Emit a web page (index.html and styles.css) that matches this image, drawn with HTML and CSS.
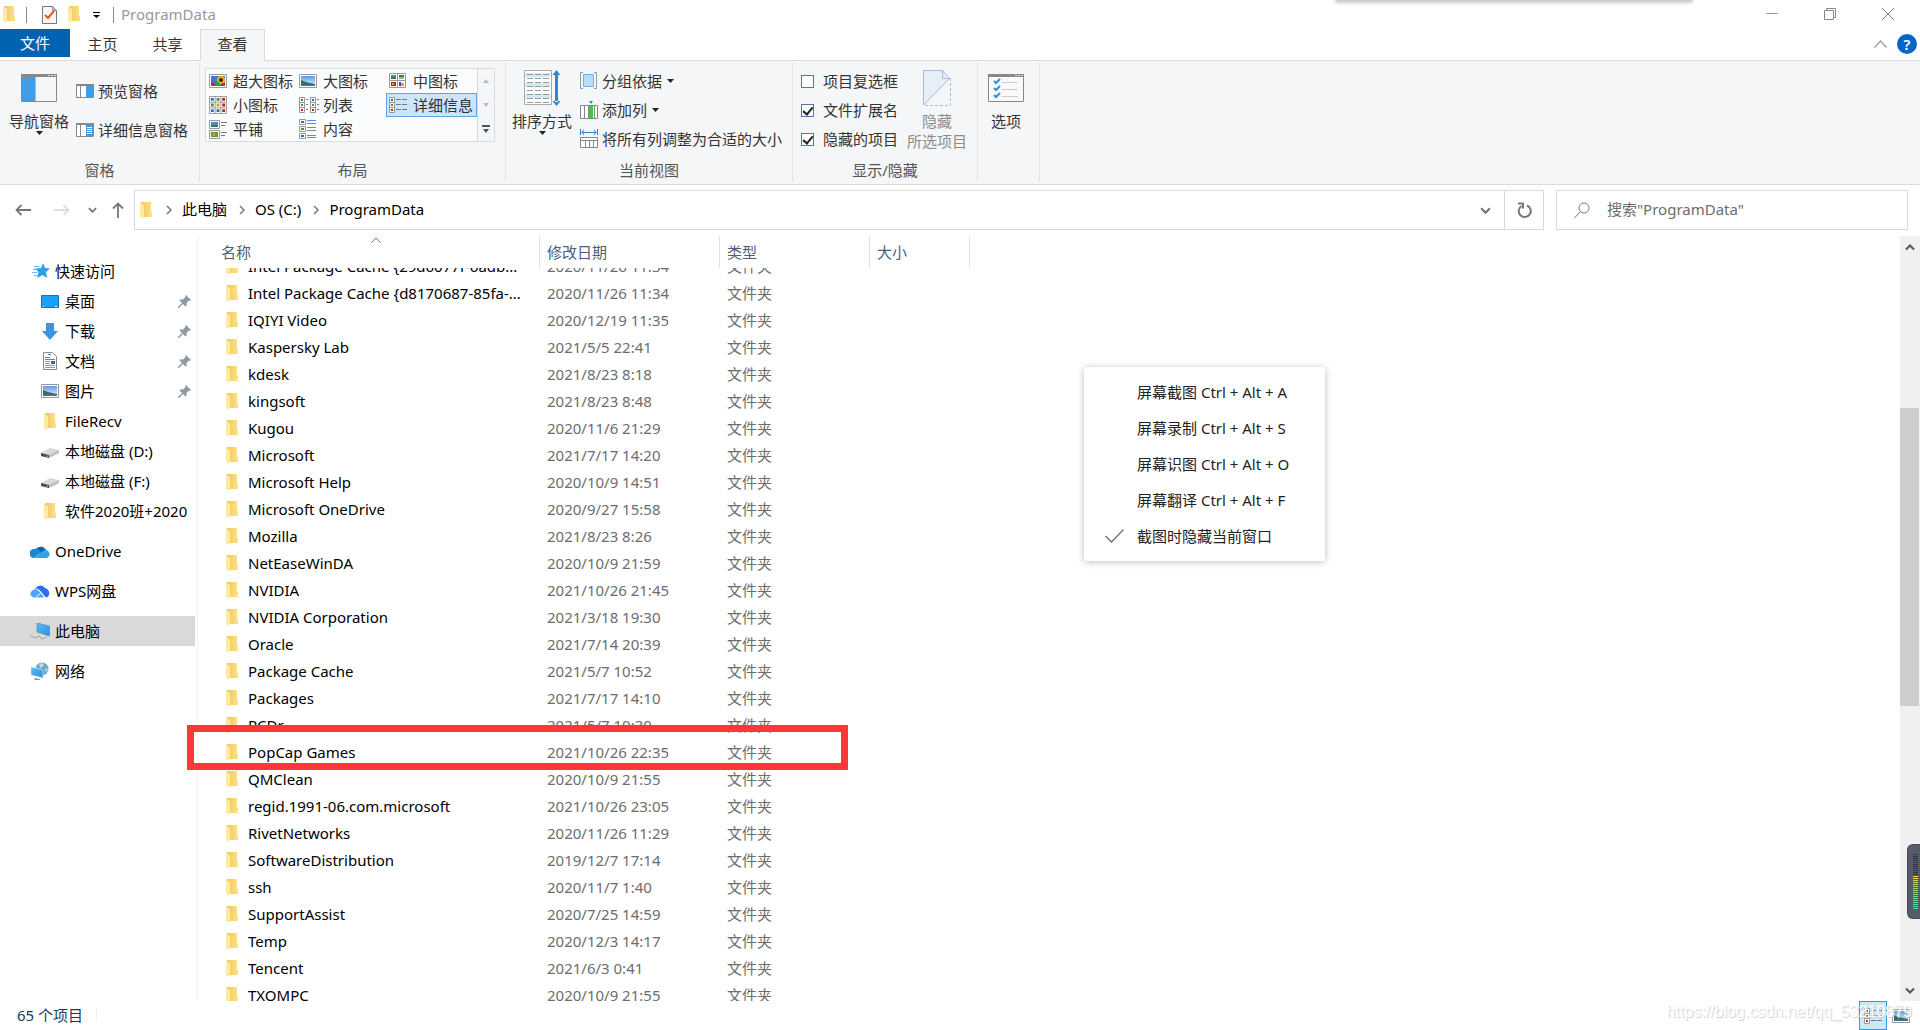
FILE: index.html
```html
<!DOCTYPE html>
<html lang="zh-CN">
<head>
<meta charset="utf-8">
<title>ProgramData</title>
<link rel="stylesheet" href="styles.css">
</head>
<body>
<svg class="defs" aria-hidden="true">
  <defs>
    <linearGradient id="gold" x1="0" x2="1"><stop offset="0" stop-color="#efc75e"/><stop offset="1" stop-color="#ffe08a"/></linearGradient>
    <linearGradient id="sky" x1="0" y1="0" x2="0" y2="1"><stop offset="0" stop-color="#5b9be8"/><stop offset="1" stop-color="#e4f1fb"/></linearGradient>
    <linearGradient id="blue" x1="0" y1="0" x2="1" y2="1"><stop offset="0" stop-color="#5cbcf5"/><stop offset="1" stop-color="#2b8fe0"/></linearGradient>
  </defs>
  <symbol id="folder" viewBox="0 0 12 17"><path fill="url(#gold)" d="M1 0h10v10h1v5H1z"/><path fill="#ffe9a6" d="M0 1l4 2v11l-1 3-3-2z"/></symbol>
  <symbol id="photo" viewBox="0 0 18 14"><path fill="#fff" stroke="#999" d="M.5.5h17v13H.5z"/><path fill="url(#sky)" d="M2 2h14v10H2z"/><path fill="#3f6b55" d="M2 6l5 2 9 2v1H2z"/><path fill="#3c74a8" d="M2 10.500h14V12H2z"/></symbol>
  <symbol id="photo-flower" viewBox="0 0 18 14"><path fill="#fff" stroke="#999" d="M.5.5h17v13H.5z"/><path fill="#3d77d8" d="M2 2h14v10H2z"/><circle cx="12" cy="6" r="4" fill="#f2b300"/><circle cx="12" cy="6" r="2" fill="#4a2108"/><path fill="#d0252c" d="M2 12V8l3 1 2 3zM13 9h3v3h-4z"/><path fill="#2f9b42" d="M6 8h4v4H7z"/></symbol>
  <symbol id="medium" viewBox="0 0 18 16"><path fill="#fff" stroke="#999" d="M.5.5h16v14H.5zM8.500.5v14M.5 7.500h16"/><path fill="#4a8fc0" d="M2 2h5v2H2z"/><path fill="#47734d" d="M2 4h5v2H2zM10 2h5v2h-5z"/><path fill="#8fc77a" d="M10 4h5v2h-5z"/><path fill="#b3261e" d="M2 9h5v4H2z"/><path fill="#e7a51d" d="M3 10h2v2H3zM12 10h3v3h-3z"/><path fill="#3450a4" d="M10 9h2v4h-2z"/></symbol>
  <symbol id="small" viewBox="0 0 19 19"><path fill="#fff" stroke="#999" d="M.5.5h18v18H.5zM6.500.5v18M12.500.5v18M.5 6.500h18M.5 12.500h18"/><path fill="#2f6fa8" d="M2 2h3v3H2zM2 14h3v3H2zM8 14h3v3H8z"/><path fill="#5a8e3e" d="M8 2h3v3H8zM2 8h3v3H2z"/><path fill="#b3261e" d="M14 2h3v3h-3zM14 8h3v3h-3zM14 14h3v3h-3z"/><path fill="#d79a1c" d="M8 8h3v3H8z"/></symbol>
  <symbol id="details" viewBox="0 0 19 16"><path fill="#fff" stroke="#999" d="M.5.5h5v15h-5zM.5 5.500h5M.5 10.500h5"/><path fill="#2f6fa8" d="M2 2h2v2H2z"/><path fill="#6b7a22" d="M2 7h2v2H2z"/><path fill="#c22" d="M2 12h2v2H2z"/><path stroke="#777" d="M7 2.500h5M13 2.500h5M7 7.500h5M13 7.500h5M7 12.500h5M13 12.500h5"/></symbol>
  <symbol id="list" viewBox="0 0 20 16"><path fill="#fff" stroke="#999" d="M.5.5h5v15h-5zM.5 5.500h5M.5 10.500h5M11.500.5h5v15h-5zM11.500 5.500h5M11.500 10.500h5"/><path fill="#2f6fa8" d="M2 2h2v2H2zM13 2h2v2h-2z"/><path fill="#5a8e3e" d="M2 7h2v2H2zM13 7h2v2h-2z"/><path fill="#c22" d="M2 12h2v2H2zM13 12h2v2h-2z"/><path stroke="#777" d="M7 2.500h2M7 7.500h2M7 12.500h2M18 2.500h2M18 7.500h2M18 12.500h2"/></symbol>
  <symbol id="tiles" viewBox="0 0 19 19"><path fill="#fff" stroke="#999" d="M.5.5h10v8H.5zM.5 10.500h10v8H.5z"/><path fill="#4a8fc0" d="M2 2h7v3H2z"/><path fill="#47734d" d="M2 5h7v2H2z"/><path fill="#5a9e3e" d="M2 12h7v5H2z"/><path fill="#e7a51d" d="M4 13h2v3H4z"/><path stroke="#777" d="M12 2.500h6M12 5.500h4M12 12.500h6M12 15.500h4"/></symbol>
  <symbol id="content" viewBox="0 0 18 20"><path fill="#fff" stroke="#999" d="M.5.5h6v5h-6zM.5 7.500h6v5h-6zM.5 14.500h6v5h-6z"/><path fill="#2f6fa8" d="M2 2h3v2H2zM2 16h3v2H2z"/><path fill="#5a8e3e" d="M2 9h3v2H2z"/><path stroke="#4a8cf0" d="M8 1.500h9M8 8.500h9M8 16.500h9"/><path stroke="#888" d="M8 4.500h9M8 11.500h9M8 18.500h9"/></symbol>
  <symbol id="pin" viewBox="0 0 13 13"><path fill="#8e9aa3" d="M8 0l5 5-1 1-1-.5L8.500 8l.2 2.500-1.200 1L5 9 1 13H0v-1l4-4-2.500-2.500 1-1.200L5 4.500 7.500 2 7 1z"/></symbol>
  <symbol id="drive" viewBox="0 -4 18 14"><path fill="#d9d9d9" d="M0 5L9 0l9 2v3L8 10 0 8z"/><path fill="#c0c0c0" d="M8 7l10-5v3L8 10z"/><path fill="#4b4f4c" d="M0 5l8 2v3L0 8z"/><path fill="#5fd35b" d="M5 7.500l2 .5v1l-2-.5z"/></symbol>
  <symbol id="chev" viewBox="0 0 10 6"><path fill="none" stroke="currentColor" stroke-width="2" d="M1 1l4 4 4-4"/></symbol>
  <symbol id="crumb" viewBox="0 0 6 10"><path fill="none" stroke="#777" stroke-width="1.500" d="M1 1l4 4-4 4"/></symbol>
  <symbol id="tri" viewBox="0 0 7 4"><path fill="currentColor" d="M0 0h7L3.500 4z"/></symbol>
</svg>

<div class="window">
  <header class="titlebar">
    <svg class="i-folder"><use href="#folder"/></svg>
    <span class="bar"></span>
    <button class="plain" aria-label="属性"><svg width="15" height="18" viewBox="0 0 15 18"><path fill="#f7f7f7" stroke="#777" d="M.5.5h10l4 4v13H.5z"/><path fill="#ccc" stroke="#888" d="M10.500.5v4h4z"/><path fill="none" stroke="#f0561d" stroke-width="2" d="M3 9l3 3 6-7"/></svg></button>
    <button class="plain" aria-label="新建文件夹"><svg class="i-folder"><use href="#folder"/></svg></button>
    <button class="plain qat" aria-label="自定义快速访问工具栏"><svg width="7" height="6" viewBox="0 0 7 6"><path d="M0 0h7v1H0zM0 3h7L3.500 6z"/></svg></button>
    <span class="bar"></span>
    <span class="title">ProgramData</span>
    <span class="drop-edge"></span>
    <div class="winbtns">
      <button class="plain" aria-label="最小化"><svg width="12" height="12" viewBox="0 0 12 12"><path stroke="#999" d="M0 5.500h12"/></svg></button>
      <button class="plain" aria-label="还原"><svg width="12" height="12" viewBox="0 0 12 12"><path fill="none" stroke="#888" d="M.5 2.500h9v9h-9zM2.500 2.500v-2h9v9h-2"/></svg></button>
      <button class="plain" aria-label="关闭"><svg width="12" height="12" viewBox="0 0 12 12"><path stroke="#888" d="M0 0l12 12M12 0L0 12"/></svg></button>
    </div>
  </header>

  <nav class="tabs">
    <button class="tab file">文件</button>
    <button class="tab">主页</button>
    <button class="tab">共享</button>
    <button class="tab active">查看</button>
    <div class="tabs-end">
      <button class="plain" aria-label="最小化功能区"><svg width="13" height="8" viewBox="0 0 13 8"><path fill="none" stroke="#999" stroke-width="1.200" d="M.5 7.500l6-6.500 6 6.500"/></svg></button>
      <button class="help" aria-label="帮助">?</button>
    </div>
  </nav>

  <section class="ribbon">
    <div class="group g-pane">
      <div class="group-body">
        <button class="big nav-big"><svg width="36" height="28" viewBox="0 0 36 28"><path fill="#f6f6f6" stroke="#888" d="M.5.5h35v27H.5z"/><path fill="#888" d="M0 0h36v3H0z"/><path stroke="#ddd" stroke-dasharray="2 1" d="M27 1.500h8"/><path fill="#3f9ce6" d="M1 3h13v24H1z"/><path fill="#bbb" d="M14 3h1v24h-1z"/></svg><span>导航窗格</span><svg class="i-tri"><use href="#tri"/></svg></button>
        <div class="stack two">
          <button class="small"><svg width="18" height="14" viewBox="0 0 18 14"><path fill="#fff" stroke="#888" d="M.5.5h17v13H.5zM4.500 1v12"/><path fill="#888" d="M0 0h18v2H0z"/><path fill="#3f9ce6" d="M10 2h7v11h-7z"/></svg>预览窗格</button>
          <button class="small"><svg width="18" height="14" viewBox="0 0 18 14"><path fill="#fff" stroke="#888" d="M.5.5h17v13H.5zM4.500 1v12"/><path fill="#888" d="M0 0h18v2H0z"/><path fill="#3f9ce6" d="M10 2h7v11h-7z"/><path stroke="#fff" d="M11 4.500h5M11 6.500h5M11 8.500h5M11 10.500h5"/></svg>详细信息窗格</button>
        </div>
      </div>
      <div class="group-name">窗格</div>
    </div>

    <div class="group g-layout">
      <div class="group-body">
        <div class="gallery">
          <button><svg width="18" height="14"><use href="#photo-flower"/></svg><span>超大图标</span></button>
          <button><svg width="18" height="14"><use href="#photo"/></svg><span>大图标</span></button>
          <button><svg width="18" height="16"><use href="#medium"/></svg><span>中图标</span></button>
          <button><svg width="18" height="18"><use href="#small"/></svg><span>小图标</span></button>
          <button><svg width="20" height="16"><use href="#list"/></svg><span>列表</span></button>
          <button class="on"><svg width="19" height="16"><use href="#details"/></svg><span>详细信息</span></button>
          <button><svg width="19" height="19"><use href="#tiles"/></svg><span>平铺</span></button>
          <button><svg width="18" height="20"><use href="#content"/></svg><span>内容</span></button>
        </div>
        <div class="gallery-nav">
          <button aria-label="上一行"><svg width="6" height="4" viewBox="0 0 6 4"><path fill="#b4bbc4" d="M0 4h6L3 0z"/></svg></button>
          <button aria-label="下一行"><svg width="6" height="4" viewBox="0 0 6 4"><path fill="#b4bbc4" d="M0 0h6L3 4z"/></svg></button>
          <button aria-label="更多"><svg width="8" height="8" viewBox="0 0 8 8"><path fill="#44546a" d="M0 0h8v2H0zM1 4h6L4 8z"/></svg></button>
        </div>
      </div>
      <div class="group-name">布局</div>
    </div>

    <div class="group g-view">
      <div class="group-body">
        <button class="big"><svg width="36" height="36" viewBox="0 0 36 36"><path fill="#fff" stroke="#aaa" d="M.5.5h27v34H.5z"/><path fill="#d3e9f5" d="M1 3h26v4H1zM1 13h26v4H1zM1 24h26v4H1z"/><path stroke="#999" stroke-dasharray="6 2" d="M3 4.500h23M3 8.500h23M3 12.500h23M3 16.500h23M3 20.500h23M3 24.500h23M3 28.500h23M3 32.500h23"/><path fill="#2f86d1" d="M31 4h3v28h-3zM28.500 5l4-5 4 5zM28.500 31l4 5 4-5z"/></svg><span>排序方式</span><svg class="i-tri"><use href="#tri"/></svg></button>
        <div class="stack three">
          <button class="small"><svg width="18" height="18" viewBox="0 0 18 18"><path fill="none" stroke="#999" d="M3 .5H.5v16H3M14 .5h2.500v16H14"/><path fill="#b5defc" stroke="#6fb2e0" d="M3.500 2.500h10v12h-10z"/></svg>分组依据<svg class="i-tri"><use href="#tri"/></svg></button>
          <button class="small"><svg width="18" height="18" viewBox="0 0 18 18"><path fill="#2f86d1" d="M9 0h4l-2 3z"/><path fill="#fff" stroke="#888" d="M.5 4.500h17v13H.5zM4.500 5v12M8.500 5v12M14.500 5v12"/><path fill="#2ed02e" d="M9 5h4v12H9z"/></svg>添加列<svg class="i-tri"><use href="#tri"/></svg></button>
          <button class="small"><svg width="18" height="20" viewBox="0 0 18 20"><path fill="none" stroke="#2f7fc4" d="M.5 0v6M17.500 0v6M2 3.500h14M4 1L2 3.500 4 6M14 1l2 2.500L14 6"/><path fill="#fff" stroke="#888" d="M.5 8.500h17v10H.5zM.5 11.500h17M5.500 12v7M9.500 12v7M13.500 12v7"/></svg>将所有列调整为合适的大小</button>
        </div>
      </div>
      <div class="group-name">当前视图</div>
    </div>

    <div class="group g-show">
      <div class="group-body">
        <div class="stack three">
          <label class="check"><input type="checkbox">项目复选框</label>
          <label class="check"><input type="checkbox" checked>文件扩展名</label>
          <label class="check"><input type="checkbox" checked>隐藏的项目</label>
        </div>
        <button class="big" disabled><svg width="28" height="36" viewBox="0 0 28 36"><path fill="#e6eefa" d="M.5.5h19l7 8L.5 35z"/><path fill="none" stroke="#a9b8d6" d="M.5 35V.5h19l7 8L.5 35M19.500.5v8h7"/><path fill="none" stroke="#a9b8d6" stroke-dasharray="3 2" d="M27.500 8v27.500H0"/></svg><span>隐藏<br>所选项目</span></button>
      </div>
      <div class="group-name">显示/隐藏</div>
    </div>

    <div class="group g-opt">
      <div class="group-body">
        <button class="big nav-big"><svg width="36" height="28" viewBox="0 0 36 28"><path fill="#f9f9f9" stroke="#888" d="M.5.5h35v27H.5z"/><path fill="#888" d="M0 0h36v3H0z"/><path stroke="#ddd" stroke-dasharray="2 1" d="M27 1.500h8"/><path fill="none" stroke="#2f8fe0" stroke-width="2" d="M6 7l2 2 4-4M6 14l2 2 4-4M6 21l2 2 4-4"/><path stroke="#ccc" d="M14 8.500h16M14 15.500h16M14 22.500h16"/></svg><span>选项</span></button>
      </div>
    </div>
  </section>

  <div class="addressrow">
    <button class="plain" aria-label="后退"><svg width="16" height="12" viewBox="0 0 16 12"><path fill="none" stroke="#777" stroke-width="1.800" d="M16 6H1.500M6.500 1l-5 5 5 5"/></svg></button>
    <button class="plain fwd" aria-label="前进"><svg width="16" height="12" viewBox="0 0 16 12"><path fill="none" stroke="#ddd" stroke-width="1.800" d="M0 6h14.500M9.500 1l5 5-5 5"/></svg></button>
    <button class="plain recent" aria-label="最近浏览的位置"><svg width="9" height="6"><use href="#chev"/></svg></button>
    <button class="plain up" aria-label="上移"><svg width="12" height="16" viewBox="0 0 12 16"><path fill="none" stroke="#777" stroke-width="1.800" d="M6 16V1.500M1 6.500l5-5 5 5"/></svg></button>
    <div class="address">
      <svg class="i-folder"><use href="#folder"/></svg>
      <svg class="i-crumb"><use href="#crumb"/></svg><a href="#">此电脑</a>
      <svg class="i-crumb"><use href="#crumb"/></svg><a href="#">OS (C:)</a>
      <svg class="i-crumb"><use href="#crumb"/></svg><a href="#">ProgramData</a>
      <button class="plain drop" aria-label="以前的位置"><svg width="11" height="7"><use href="#chev"/></svg></button>
      <button class="plain refresh" aria-label="刷新"><svg width="15" height="17" viewBox="0 0 15 17"><path fill="none" stroke="#777" stroke-width="2" d="M10 3.500A6 6 0 1 1 4.500 4"/><path fill="none" stroke="#777" stroke-width="2" d="M1 1.500h5v5"/></svg></button>
    </div>
    <label class="search">
      <svg width="16" height="17" viewBox="0 0 16 17"><circle cx="10" cy="6" r="5" fill="none" stroke="#777"/><path stroke="#777" d="M6.500 9.500L0 16.500"/></svg>
      <input type="text" placeholder="搜索&quot;ProgramData&quot;" aria-label="搜索">
    </label>
  </div>

  <main class="content">
    <aside class="tree">
      <ul>
        <li><a href="#" class="root"><svg width="18" height="16" viewBox="0 0 18 16"><path fill="#2b9fec" d="M11 0l2 5 5 .5-4 3.500 1 6-4.500-3L5 15l1.500-6L3 5.500 9 5z"/><path stroke="#64bdf3" d="M2 3.500h5M1 6.500h5M0 9.500h5M2 12.500h3"/></svg>快速访问</a></li>
        <li><a href="#"><svg width="18" height="13" viewBox="0 0 18 13"><path fill="#19a0fb" stroke="#1272bd" d="M.5.5h17v12H.5z"/><path stroke="#fff" d="M2 11.500h1M14 11.500h2"/></svg><span>桌面</span><svg class="i-pin"><use href="#pin"/></svg></a></li>
        <li><a href="#"><svg width="18" height="17" viewBox="0 0 18 17"><path fill="#3a94e4" d="M5 0h8v8h4l-8 9-8-9h4z"/></svg><span>下载</span><svg class="i-pin"><use href="#pin"/></svg></a></li>
        <li><a href="#"><svg width="18" height="18" viewBox="0 0 18 18"><path fill="#fff" stroke="#888" d="M2.500.5h9l4 4v13h-13z"/><path stroke="#3a94c4" d="M4 5.500h5M7 2.500h3M4 7.500h10"/><path stroke="#999" d="M4 9.500h5M4 11.500h5M4 13.500h10M4 15.500h10"/><path fill="#2f6f9f" d="M10 9h4v3h-4z"/></svg><span>文档</span><svg class="i-pin"><use href="#pin"/></svg></a></li>
        <li><a href="#"><svg width="18" height="14"><use href="#photo"/></svg><span>图片</span><svg class="i-pin"><use href="#pin"/></svg></a></li>
        <li><a href="#"><svg width="18" height="17"><use href="#folder"/></svg><span>FileRecv</span></a></li>
        <li><a href="#"><svg width="18" height="14"><use href="#drive"/></svg><span>本地磁盘 (D:)</span></a></li>
        <li><a href="#"><svg width="18" height="14"><use href="#drive"/></svg><span>本地磁盘 (F:)</span></a></li>
        <li><a href="#"><svg width="18" height="17"><use href="#folder"/></svg><span>软件2020班+2020</span></a></li>
      </ul>
      <ul>
        <li><a href="#" class="root wide"><svg width="20" height="13" viewBox="0 0 20 13"><path fill="#0f5fae" d="M6 4a6 6 0 0 1 10 1L9 9z"/><path fill="#1787d8" d="M4 13a4 4 0 0 1 0-9c3-1 5 0 7 3z"/><path fill="#28a8ea" d="M4 13l9-7c4-3 8 2 6 5-1 2-2 2-4 2z"/></svg>OneDrive</a></li>
      </ul>
      <ul>
        <li><a href="#" class="root wide"><svg width="20" height="14" viewBox="0 0 20 14"><path fill="#2a6ff0" d="M5 6a5.500 5.500 0 0 1 10-2c5 1 6 8 1 9.500L9 6z"/><path fill="#4fa4fb" d="M4 13.500c-5-1-5-7 1-8 3 0 5 2 9 8z"/><path fill="none" stroke="#fff" d="M6 5c4 0 5 4 9 8.500M6 13.500l5-5"/></svg>WPS网盘</a></li>
      </ul>
      <ul>
        <li><a href="#" class="root wide selected"><svg width="20" height="17" viewBox="0 0 20 17"><path fill="url(#blue)" stroke="#5a7f9c" stroke-width=".6" d="M7 0l12.500 3v10L7 9z"/><path fill="none" stroke="#9aa3ab" d="M0 12l5 3 4-2 3 3 5-2"/></svg>此电脑</a></li>
      </ul>
      <ul>
        <li><a href="#" class="root wide"><svg width="20" height="18" viewBox="0 0 20 18"><circle cx="12" cy="7" r="6.500" fill="#6aa5c4"/><path fill="#b8dcea" d="M9 2l4-1 1 3-4 2zM15 6l3 1-2 4z"/><path fill="url(#blue)" stroke="#e3f0f8" stroke-width=".6" d="M1 5l12 3v8L1 13z"/><path fill="#999" d="M5 16l5 1v1H4z"/></svg>网络</a></li>
      </ul>
    </aside>

    <table class="files">
      <thead>
        <tr><th>名称<svg class="sort" width="10" height="6" viewBox="0 0 10 6"><path fill="none" stroke="#777" d="M.5 5.500L5 1l4.500 4.500"/></svg></th><th>修改日期</th><th>类型</th><th>大小</th></tr>
      </thead>
      <tbody>
        <tr><td><svg><use href="#folder"/></svg><span>Intel Package Cache {29d6077f-6adb...</span></td><td>2020/11/26 11:34</td><td>文件夹</td><td></td></tr>
        <tr><td><svg><use href="#folder"/></svg><span>Intel Package Cache {d8170687-85fa-...</span></td><td>2020/11/26 11:34</td><td>文件夹</td><td></td></tr>
        <tr><td><svg><use href="#folder"/></svg><span>IQIYI Video</span></td><td>2020/12/19 11:35</td><td>文件夹</td><td></td></tr>
        <tr><td><svg><use href="#folder"/></svg><span>Kaspersky Lab</span></td><td>2021/5/5 22:41</td><td>文件夹</td><td></td></tr>
        <tr><td><svg><use href="#folder"/></svg><span>kdesk</span></td><td>2021/8/23 8:18</td><td>文件夹</td><td></td></tr>
        <tr><td><svg><use href="#folder"/></svg><span>kingsoft</span></td><td>2021/8/23 8:48</td><td>文件夹</td><td></td></tr>
        <tr><td><svg><use href="#folder"/></svg><span>Kugou</span></td><td>2020/11/6 21:29</td><td>文件夹</td><td></td></tr>
        <tr><td><svg><use href="#folder"/></svg><span>Microsoft</span></td><td>2021/7/17 14:20</td><td>文件夹</td><td></td></tr>
        <tr><td><svg><use href="#folder"/></svg><span>Microsoft Help</span></td><td>2020/10/9 14:51</td><td>文件夹</td><td></td></tr>
        <tr><td><svg><use href="#folder"/></svg><span>Microsoft OneDrive</span></td><td>2020/9/27 15:58</td><td>文件夹</td><td></td></tr>
        <tr><td><svg><use href="#folder"/></svg><span>Mozilla</span></td><td>2021/8/23 8:26</td><td>文件夹</td><td></td></tr>
        <tr><td><svg><use href="#folder"/></svg><span>NetEaseWinDA</span></td><td>2020/10/9 21:59</td><td>文件夹</td><td></td></tr>
        <tr><td><svg><use href="#folder"/></svg><span>NVIDIA</span></td><td>2021/10/26 21:45</td><td>文件夹</td><td></td></tr>
        <tr><td><svg><use href="#folder"/></svg><span>NVIDIA Corporation</span></td><td>2021/3/18 19:30</td><td>文件夹</td><td></td></tr>
        <tr><td><svg><use href="#folder"/></svg><span>Oracle</span></td><td>2021/7/14 20:39</td><td>文件夹</td><td></td></tr>
        <tr><td><svg><use href="#folder"/></svg><span>Package Cache</span></td><td>2021/5/7 10:52</td><td>文件夹</td><td></td></tr>
        <tr><td><svg><use href="#folder"/></svg><span>Packages</span></td><td>2021/7/17 14:10</td><td>文件夹</td><td></td></tr>
        <tr><td><svg><use href="#folder"/></svg><span>PCDr</span></td><td>2021/5/7 10:30</td><td>文件夹</td><td></td></tr>
        <tr><td><svg><use href="#folder"/></svg><span>PopCap Games</span></td><td>2021/10/26 22:35</td><td>文件夹</td><td></td></tr>
        <tr><td><svg><use href="#folder"/></svg><span>QMClean</span></td><td>2020/10/9 21:55</td><td>文件夹</td><td></td></tr>
        <tr><td><svg><use href="#folder"/></svg><span>regid.1991-06.com.microsoft</span></td><td>2021/10/26 23:05</td><td>文件夹</td><td></td></tr>
        <tr><td><svg><use href="#folder"/></svg><span>RivetNetworks</span></td><td>2020/11/26 11:29</td><td>文件夹</td><td></td></tr>
        <tr><td><svg><use href="#folder"/></svg><span>SoftwareDistribution</span></td><td>2019/12/7 17:14</td><td>文件夹</td><td></td></tr>
        <tr><td><svg><use href="#folder"/></svg><span>ssh</span></td><td>2020/11/7 1:40</td><td>文件夹</td><td></td></tr>
        <tr><td><svg><use href="#folder"/></svg><span>SupportAssist</span></td><td>2020/7/25 14:59</td><td>文件夹</td><td></td></tr>
        <tr><td><svg><use href="#folder"/></svg><span>Temp</span></td><td>2020/12/3 14:17</td><td>文件夹</td><td></td></tr>
        <tr><td><svg><use href="#folder"/></svg><span>Tencent</span></td><td>2021/6/3 0:41</td><td>文件夹</td><td></td></tr>
        <tr><td><svg><use href="#folder"/></svg><span>TXOMPC</span></td><td>2020/10/9 21:55</td><td>文件夹</td><td></td></tr>
      </tbody>
    </table>
    <div class="mark-box"></div>

    <div class="scrollbar">
      <button class="plain" aria-label="向上滚动"><svg class="flip" width="10" height="7"><use href="#chev"/></svg></button>
      <div class="track"><div class="thumb"></div></div>
      <button class="plain" aria-label="向下滚动"><svg width="10" height="7"><use href="#chev"/></svg></button>
    </div>
  </main>

  <footer class="status">
    <span class="count">65 个项目</span>
    <span class="watermark">https://blog.csdn.net/qq_53210879</span>
    <div class="views">
      <button class="on" aria-label="详细信息"><svg width="19" height="16"><use href="#details"/></svg></button>
      <button aria-label="大图标"><svg width="18" height="14"><use href="#photo"/></svg></button>
    </div>
  </footer>

  <div class="menu" role="menu">
    <button role="menuitem">屏幕截图 Ctrl + Alt + A</button>
    <button role="menuitem">屏幕录制 Ctrl + Alt + S</button>
    <button role="menuitem">屏幕识图 Ctrl + Alt + O</button>
    <button role="menuitem">屏幕翻译 Ctrl + Alt + F</button>
    <button role="menuitem" class="ticked"><svg width="19" height="14" viewBox="0 0 19 14"><path fill="none" stroke="#777" stroke-width="1.500" d="M.5 7l6 6L18.500.5"/></svg>截图时隐藏当前窗口</button>
  </div>
  <div class="gadget"><div class="level off"></div><div class="level"></div></div>
</div>
</body>
</html>
```

FILE: styles.css
```css
* { box-sizing: border-box; }

body {
  margin: 0;
  background: #fff;
  color: #000;
  font: 15px/20px "Noto Sans", "Noto Sans CJK SC", sans-serif;
}

.defs { position: absolute; width: 0; height: 0; }
svg { display: block; flex: none; }
a { color: inherit; text-decoration: none; }
button, input { font: inherit; color: inherit; }
button { border: 0; padding: 0; background: none; white-space: nowrap; }
.plain { display: flex; align-items: center; justify-content: center; }
.i-folder { width: 12px; height: 17px; }
.i-tri { width: 7px; height: 4px; color: #222; }
.i-crumb { width: 6px; height: 10px; }

.window {
  position: relative;
  display: flex;
  flex-direction: column;
  height: 100vh;
  overflow: hidden;
}

/* title bar */
.titlebar { display: flex; align-items: center; height: 29px; padding-left: 3px; flex: none; }
.titlebar .bar { width: 1px; height: 16px; background: #8a8a8a; margin: 0 15px 0 11px; }
.titlebar .plain + .plain { margin-left: 11px; }
.titlebar .plain + .qat { margin-left: 13px; }
.titlebar .qat + .bar { margin: 0 7px 0 13px; }
.title { padding-bottom: 2px; color: #999; }
.drop-edge {
  position: absolute;
  top: -8px;
  right: 228px;
  width: 356px;
  height: 10px;
  background: #d0d0d0;
  box-shadow: 0 0 4px #aaa;
}
.winbtns { display: flex; margin-left: auto; padding-right: 3px; }
.titlebar .winbtns .plain { width: 58px; height: 29px; margin: 0; padding-bottom: 2px; }

/* ribbon tabs */
.tabs { display: flex; height: 32px; flex: none; border-bottom: 1px solid #dadbdc; }
.tab { width: 65px; height: 31px; padding-bottom: 2px; color: #333; }
.tab.file { width: 70px; height: 28px; padding: 0; background: #0063b1; color: #fff; }
.tab.active { height: 32px; padding-bottom: 3px; background: #f5f6f7; border: 1px solid #dadbdc; border-bottom: 0; }
.tabs-end { display: flex; align-items: center; gap: 10px; margin-left: auto; padding: 0 3px 2px 0; }
.help { width: 20px; height: 20px; border-radius: 50%; background: #0067c8; color: #fff; font-weight: 600; }

/* ribbon */
.ribbon { display: flex; flex: none; height: 124px; padding: 2px 0; background: #f5f6f8; border-bottom: 1px solid #dadbdc; color: #333; }
.group { display: flex; flex-direction: column; flex: none; border-right: 1px solid #e2e3e4; }
.group-body { display: flex; flex: 1; align-items: flex-start; }
.group-name { height: 22px; text-align: center; color: #555; }
.g-pane { width: 200px; }
.g-layout { width: 306px; }
.g-view { width: 287px; }
.g-show { width: 185px; }
.g-opt { width: 62px; }
.g-layout .group-body { padding-left: 5px; }
.g-view .group-body { padding-left: 6px; }
.g-show .group-body { padding-left: 8px; }
.g-opt .group-body { padding-left: 10px; }
.big { display: flex; flex-direction: column; align-items: center; padding-top: 7px; color: inherit; }
.big span { margin-top: 5px; }
.g-pane .big { padding-left: 9px; margin-right: 7px; }
.nav-big { padding-top: 11px; }
.nav-big span { margin-top: 9px; }
.g-show .big { margin-left: 9px; color: #8d8d8d; }
.small { display: flex; align-items: center; gap: 4px; height: 20px; }
.small .i-tri { margin-left: 1px; }
.stack { display: flex; flex-direction: column; align-items: flex-start; }
.two { padding-top: 18px; gap: 19px; }
.three { padding-top: 8px; gap: 9px; }
.g-view .stack { margin-left: 8px; }
.check { display: flex; align-items: center; gap: 9px; height: 20px; white-space: nowrap; }
.check input {
  appearance: none;
  width: 13px;
  height: 13px;
  margin: 0;
  border: 1px solid #5b76a6;
  background: #fff;
}
.check input:checked::after {
  content: "";
  display: block;
  width: 4px;
  height: 8px;
  margin: 0 auto;
  border: solid #222;
  border-width: 0 2px 2px 0;
  transform: rotate(40deg);
}

.gallery {
  display: grid;
  grid-template-columns: 90px 90px 91px;
  grid-template-rows: 24px 24px 24px;
  width: 272px;
  margin-top: 5px;
  border: 1px solid #dadbdc;
  border-right: 0;
  background: #fbfcfe;
}
.gallery button { display: grid; grid-template-columns: 20px auto; gap: 4px; align-items: center; justify-content: start; padding-left: 3px; }
.gallery button.on { padding-left: 2px; background: #cce4fc; border: 1px solid #62a2e4; }
.gallery-nav { display: flex; flex-direction: column; width: 18px; margin-top: 5px; border: 1px solid #dadbdc; }
.gallery-nav button { display: grid; place-items: center; height: 24px; }

/* address row */
.addressrow { display: flex; align-items: center; flex: none; height: 51px; padding: 5px 12px 6px 15px; }
.fwd { margin-left: 23px; }
.recent { margin-left: 18px; color: #777; }
.up { margin: 0 10px 0 15px; }
.address { display: flex; align-items: center; flex: 1; height: 40px; padding-left: 5px; border: 1px solid #d9d9d9; }
.address a { padding-bottom: 2px; }
.address .i-crumb { margin: 0 10px 0 12px; }
.address .i-folder + .i-crumb { margin-left: 14px; }
.drop { margin: 0 13px 0 auto; color: #777; }
.refresh { width: 39px; height: 38px; border-left: 1px solid #d9d9d9; }
.search { display: flex; align-items: center; gap: 17px; width: 352px; height: 40px; margin-left: 12px; padding-left: 17px; border: 1px solid #d9d9d9; }
.search input { flex: 1; min-width: 0; border: 0; outline: 0; padding: 0 0 2px; background: none; }
.search input::placeholder { color: #6d6d6d; opacity: 1; }

/* main area */
.content { position: relative; display: flex; flex: 1; min-height: 0; }
.tree { flex: none; width: 198px; padding: 20px 2px 0 0; border-right: 1px solid #f3f3f3; overflow: hidden; }
.tree ul { margin: 0 0 10px; padding: 0; list-style: none; }
.tree a { display: flex; align-items: center; gap: 6px; height: 30px; padding-left: 41px; white-space: nowrap; }
.tree .root { padding-left: 32px; gap: 5px; }
.tree .wide { padding-left: 30px; }
.tree .selected { background: #d9d9d9; }
.i-pin { width: 13px; height: 13px; margin: 0 4px 0 auto; }

.files { display: flex; flex-direction: column; flex: 1; min-width: 0; border-spacing: 0; }
.files thead, .files tbody { display: block; }
.files tbody { flex: 1; min-height: 0; overflow: hidden; }
.files tr { display: grid; grid-template-columns: 342px 180px 150px 100px; }
.files th { position: relative; height: 32px; padding: 6px 7px; border-right: 1px solid #e3e3e3; text-align: left; font-weight: 400; color: #4c607a; }
.files th:first-child { padding-left: 23px; }
.files .sort { position: absolute; top: 1px; left: 173px; }
.files td { height: 27px; padding: 3px 7px 4px; color: #6d6d6d; white-space: nowrap; }
.files td:first-child { display: flex; align-items: center; gap: 10px; padding-left: 28px; color: #000; }
.files td svg { width: 12px; height: 17px; }
/* the list is scrolled part-way into its first row */
.files tbody tr:first-child { margin-top: -15px; }

.mark-box { position: absolute; top: 489px; left: 187px; width: 661px; height: 45px; border: 7px solid #fb3838; }

.scrollbar { display: flex; flex-direction: column; flex: none; width: 20px; background: #f0f0f0; color: #555; }
.scrollbar .plain { height: 22px; }
.flip { transform: rotate(180deg); }
.track { flex: 1; padding-top: 150px; }
.thumb { width: 19px; height: 298px; background: #cdcdcd; }

/* status bar */
.status { position: relative; display: flex; align-items: center; flex: none; height: 29px; padding-left: 17px; }
.count { margin-bottom: 2px; padding-right: 13px; border-right: 1px solid #f0f0f0; color: #1e395b; line-height: 14px; }
.views { display: flex; margin-left: auto; padding-right: 5px; align-self: stretch; }
.views button { display: grid; place-items: center; width: 28px; }
.views button.on { background: #cce8f6; border: 1px solid #26a0da; }
.watermark { position: absolute; right: 8px; bottom: 8px; font: 16px/20px "Liberation Sans", sans-serif; color: #fff; text-shadow: 1px 1px 1px #ccc; }

/* capture menu */
.menu { position: absolute; top: 367px; left: 1084px; width: 241px; padding: 7px 0; border-radius: 3px; background: #fff; box-shadow: 0 1px 7px #bbb; }
.menu button { display: flex; align-items: center; width: 100%; height: 36px; padding-left: 53px; color: #222; }
.menu .ticked { gap: 13px; padding-left: 21px; }

/* desktop level meter */
.gadget { position: absolute; top: 844px; right: 0; width: 13px; height: 75px; padding: 9px 2px 0 5px; border-radius: 6px 0 0 6px; background: #555b69; border: 1px solid #444a57; border-right: 0; }
.level { height: 34px; background: repeating-linear-gradient(transparent 0 1px, #555b69 1px 2px), linear-gradient(#f0d834, #8ed47a 50%, #3fd9c4); }
.level.off { height: 22px; background: repeating-linear-gradient(#2f3440 0 1px, #555b69 1px 2px); }
```
